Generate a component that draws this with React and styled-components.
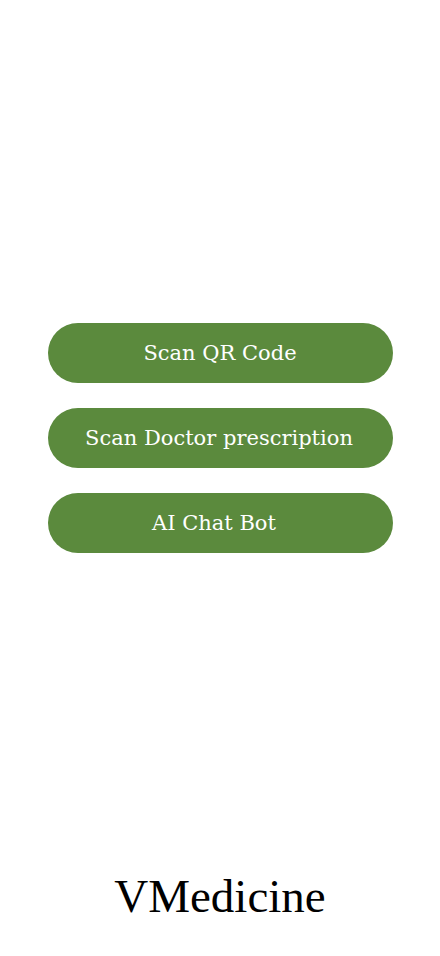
import React from 'react';
import styled, { createGlobalStyle } from 'styled-components';

const GlobalStyle = createGlobalStyle`
  html, body {
    margin: 0;
    padding: 0;
    background: #ffffff;
  }
`;

const Screen = styled.div`
  height: 956px;
  display: flex;
  flex-direction: column;
  background: #ffffff;
`;

const Actions = styled.div`
  flex: 1;
  display: flex;
  flex-direction: column;
  justify-content: center;
  align-items: center;
  gap: 25px;
  padding-top: 2px;
`;

const ActionButton = styled.button`
  width: 345px;
  height: 60px;
  border: none;
  border-radius: 30px;
  background: #5b8a3d;
  color: #ffffff;
  font-family: 'DejaVu Serif', serif;
  font-size: 21px;
  cursor: pointer;
  padding: 0 ${props => props.$shift || 0}px 0 0;
`;

const Footer = styled.div`
  height: 83px;
  display: flex;
  justify-content: center;
  align-items: flex-start;
`;

const Brand = styled.h1`
  margin: 0;
  font-family: 'Liberation Serif', serif;
  font-weight: 400;
  font-size: 47px;
  line-height: 47px;
  color: #000000;
`;

const actions = [
  { label: 'Scan QR Code', shift: 0 },
  { label: 'Scan Doctor prescription', shift: 2 },
  { label: 'AI Chat Bot', shift: 12 },
];

const App = () => (
  <>
    <GlobalStyle />
    <Screen>
      <Actions>
        {actions.map(item => (
          <ActionButton key={item.label} $shift={item.shift}>
            {item.label}
          </ActionButton>
        ))}
      </Actions>
      <Footer>
        <Brand>VMedicine</Brand>
      </Footer>
    </Screen>
  </>
);

export default App;
